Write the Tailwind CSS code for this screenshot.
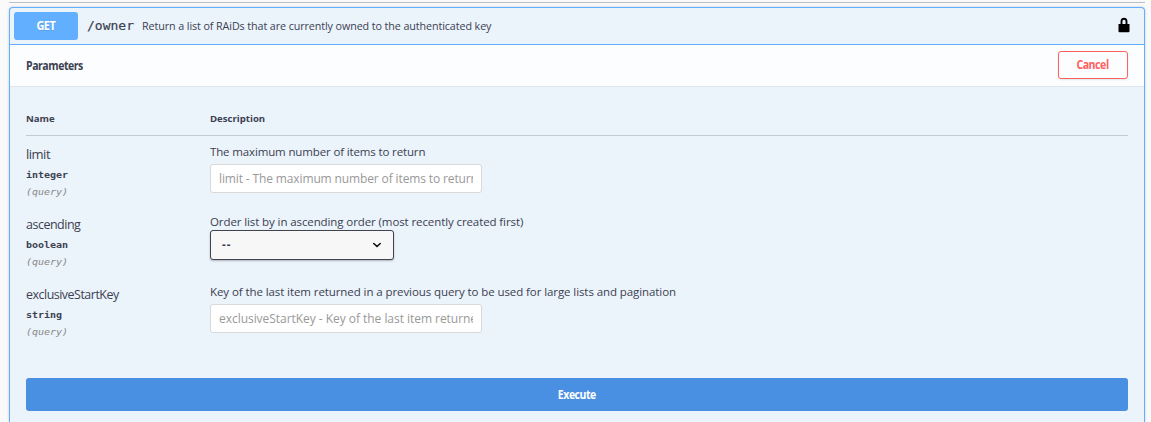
<!DOCTYPE html>
<html lang="en">
<head>
<meta charset="utf-8">
<title>API operation</title>
<script src="https://cdn.jsdelivr.net/npm/@tailwindcss/browser@4"></script>
</head>
<body class="h-[422px] overflow-hidden bg-[#fafafa] pr-[6px] pl-[9px] pt-[2px] font-['Open_Sans',sans-serif] text-[#3b4151]">
<div class="h-px bg-[#bbbec7]"></div>
<section class="mt-1 h-[415px] rounded-t border border-b-0 border-[#61affe] bg-[#ebf3fb] shadow-[0_0_3px_rgba(0,0,0,0.19)] whitespace-nowrap">
  <header class="flex h-[37px] items-center border-b border-[#61affe] pl-1 pr-[14px]">
    <span class="flex h-7 w-16 items-center justify-center rounded-[3px] bg-[#61affe] text-[11.5px] font-bold tracking-[-0.6px] text-white [text-shadow:0_1px_0_rgba(0,0,0,0.1)]"><span class="scale-x-95">GET</span></span>
    <span class="ml-[9px] w-[55px] font-['DejaVu_Sans_Mono',monospace] text-[13px] [-webkit-text-stroke:0.2px_#3b4151]">/owner</span>
    <span class="origin-left scale-x-[0.934] text-[11.5px] tracking-[-0.1px]">Return a list of RAiDs that are currently owned to the authenticated key</span>
    <svg class="-mt-[3px] ml-auto h-4 w-3" viewBox="0 0 12 16"><path d="M.5 7h11v7.2q0 1.1-1.1 1.1H1.6Q.5 15.300.5 14.200z" fill="#000"/><path d="M3.500 7.300V4.300q0-2.600 2.500-2.600t2.500 2.600v3" fill="none" stroke="#000" stroke-width="1.900"/></svg>
  </header>
  <div class="flex h-[42px] items-center justify-between border-b border-[#dfe6ee] bg-[#fbfdff] px-4 pb-px">
    <h4 class="origin-left scale-x-[0.915] pt-px text-[11.5px] font-bold tracking-[-0.5px]">Parameters</h4>
    <button class="h-7 w-[70px] rounded-[3px] border border-[#ff6060] text-[11.5px] font-bold tracking-[-0.5px] text-[#ff6060] shadow-[0_1px_2px_rgba(0,0,0,0.1)]"><span class="inline-block scale-x-[0.92]">Cancel</span></button>
  </div>
  <div class="px-4">
    <div class="grid h-[49px] grid-cols-[184px_1fr] items-end border-b border-[#c3cad6] pb-[9px] text-[9.6px] leading-[14px] font-bold"><span>Name</span><span>Description</span></div>
    <div class="grid h-[70px] grid-cols-[184px_1fr]">
      <div class="pt-2">
        <div class="origin-left text-[13px] leading-5 tracking-[-0.5px]">limit</div>
        <div class="mt-[2px] scale-y-90 font-['DejaVu_Sans_Mono',monospace] text-[10px] leading-[18px] font-bold">integer</div>
        <div class="scale-y-90 font-['DejaVu_Sans_Mono',monospace] text-[10px] leading-4 text-[#888] italic">(query)</div>
      </div>
      <div class="pt-2">
        <p class="text-[11.5px] leading-4 tracking-[-0.14px]">The maximum number of items to return</p>
        <div class="mt-1 h-[29px] w-[272px] rounded-[3px] border border-[#d9d9d9] bg-white px-2 text-[12px] leading-[27px] tracking-[-0.13px] text-[#999]"><div class="overflow-hidden">limit - The maximum number of items to return</div></div>
      </div>
    </div>
    <div class="grid h-[70px] grid-cols-[184px_1fr]">
      <div class="pt-2">
        <div class="origin-left scale-x-[0.96] text-[13px] leading-5 tracking-[-0.5px]">ascending</div>
        <div class="mt-[2px] scale-y-90 font-['DejaVu_Sans_Mono',monospace] text-[10px] leading-[18px] font-bold">boolean</div>
        <div class="scale-y-90 font-['DejaVu_Sans_Mono',monospace] text-[10px] leading-4 text-[#888] italic">(query)</div>
      </div>
      <div class="pt-2">
        <p class="text-[11.5px] leading-4 tracking-[-0.1px]">Order list by in ascending order (most recently created first)</p>
        <div class="flex h-[30px] w-[184px] items-center justify-between rounded-[3px] border border-[#41444e] bg-[#f7f7f7] pr-[11px] pl-[11px] text-[11.5px] font-bold shadow-[0_1px_2px_rgba(0,0,0,0.25)]"><span class="tracking-[1px]">--</span><svg class="h-[10px] w-[10px]" viewBox="0 0 10 10"><path d="M1.8 3.500 5 6.500l3.200-3" fill="none" stroke="#111" stroke-width="1.6" stroke-linecap="round"/></svg></div>
      </div>
    </div>
    <div class="grid h-[70px] grid-cols-[184px_1fr]">
      <div class="pt-2">
        <div class="origin-left scale-x-[0.955] text-[13px] leading-5 tracking-[-0.5px]">exclusiveStartKey</div>
        <div class="mt-[2px] scale-y-90 font-['DejaVu_Sans_Mono',monospace] text-[10px] leading-[18px] font-bold">string</div>
        <div class="scale-y-90 font-['DejaVu_Sans_Mono',monospace] text-[10px] leading-4 text-[#888] italic">(query)</div>
      </div>
      <div class="pt-2">
        <p class="text-[11.5px] leading-4 tracking-[-0.085px]">Key of the last item returned in a previous query to be used for large lists and pagination</p>
        <div class="mt-1 h-[29px] w-[272px] rounded-[3px] border border-[#d9d9d9] bg-white px-2 text-[12px] leading-[27px] tracking-[-0.04px] text-[#999]"><div class="overflow-hidden">exclusiveStartKey - Key of the last item returned</div></div>
      </div>
    </div>
    <button class="mt-8 block h-[33px] w-full rounded-[3px] bg-[#4990e2] text-[11.5px] font-bold tracking-[-0.5px] text-white"><span class="inline-block scale-x-[0.91]">Execute</span></button>
  </div>
</section>
</body>
</html>
